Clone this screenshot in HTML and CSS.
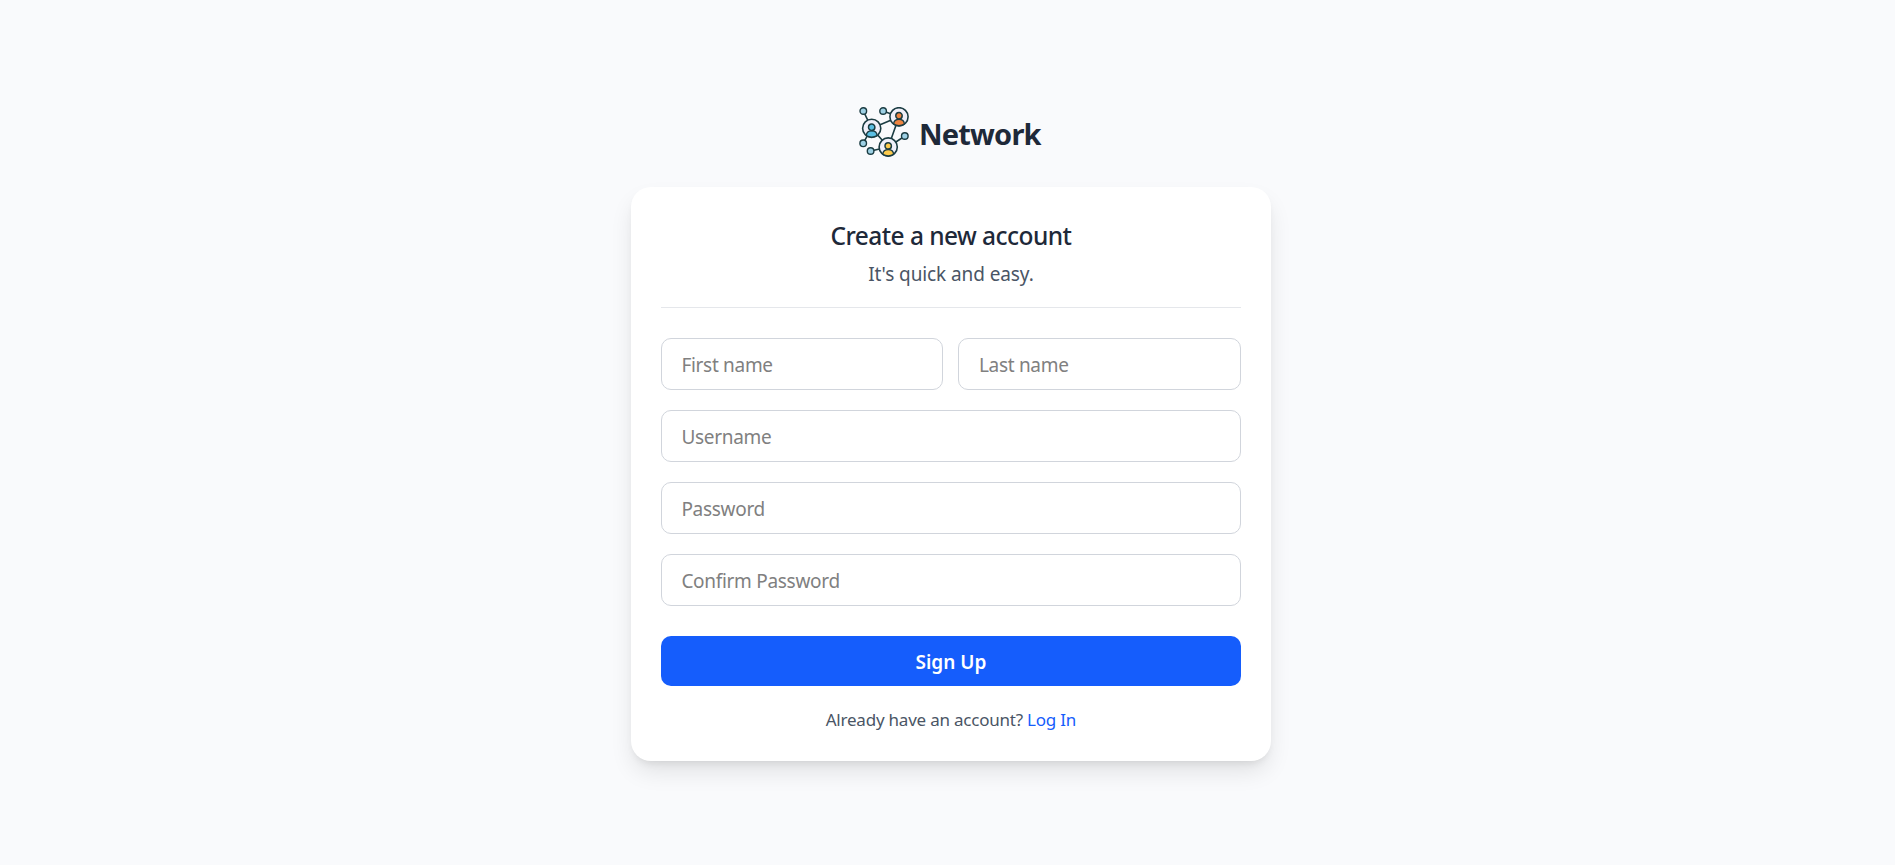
FILE: index.html
```html
<!DOCTYPE html>
<html lang="en">
<head>
<meta charset="utf-8">
<title>Network - Sign Up</title>
<link rel="stylesheet" href="styles.css">
</head>
<body>
<main class="page">
  <header class="brand">
    <svg class="logo" viewBox="0 0 50 50" aria-hidden="true">
      <defs>
        <g id="person">
          <circle r="9.1" fill="#f0f0fa" stroke="#1b3c42" stroke-width="1.6"/>
          <path d="M-5.4 7.4C-5.2 4-3 2.6 0 2.6S5.2 4 5.4 7.4Q3 9 0 9T-5.4 7.4Z" stroke="#1b3c42" stroke-width="1.4"/>
          <circle cy="-1.1" r="3.2" stroke="#1b3c42" stroke-width="1.5"/>
        </g>
      </defs>
      <path class="links" d="M4.3 4L12.7 21.3L4 36.3M24 4L40 9.7L12.7 21.3L29.3 40L40 9.7M46 29L29.3 40L11.7 44"/>
      <g class="nodes">
        <circle cx="4.3" cy="4" r="3.3"/>
        <circle cx="24.1" cy="4" r="3.3"/>
        <circle cx="4.2" cy="36.3" r="3.3"/>
        <circle cx="11.6" cy="44" r="3.3"/>
        <circle cx="45.8" cy="29" r="3.3"/>
      </g>
      <use href="#person" x="12.7" y="21.3" fill="#5bbfe3"/>
      <use href="#person" x="40" y="9.8" fill="#ee8440"/>
      <use href="#person" x="29.2" y="40" fill="#fdca4c"/>
    </svg>
    <h1 class="brand-name">Network</h1>
  </header>
  <section class="card">
    <div class="card-head">
      <h2 class="title">Create a new account</h2>
      <p class="subtitle">It's quick and easy.</p>
    </div>
    <form class="form">
      <div class="row">
        <input class="field" type="text" placeholder="First name">
        <input class="field" type="text" placeholder="Last name">
      </div>
      <input class="field" type="text" placeholder="Username">
      <input class="field" type="password" placeholder="Password">
      <input class="field" type="password" placeholder="Confirm Password">
      <button class="submit" type="button">Sign Up</button>
    </form>
    <p class="footer">Already have an account? <a class="link" href="#">Log In</a></p>
  </section>
</main>
</body>
</html>
```
FILE: styles.css
```css
* { box-sizing: border-box; }
body {
  margin: 0;
  background: #f9fafc;
  color: #1e2939;
  font-family: "Noto Sans", "Open Sans", sans-serif;
}
h1, h2, p { margin: 0; }
.page {
  min-height: 865px;
  display: flex;
  flex-direction: column;
  align-items: center;
  padding: 105px 0 0 6.8px;
}
.brand {
  display: flex;
  align-items: center;
  gap: 10px;
  height: 54px;
  margin-bottom: 28px;
  padding-right: 2px;
}
.logo { width: 50px; height: 50px; display: block; }
.links { fill: none; stroke: #1b3c42; stroke-width: 1.6; }
.nodes { fill: #9dd0e4; stroke: #1b3c42; stroke-width: 1.4; }
.brand-name {
  font-size: 29px;
  line-height: 38px;
  font-weight: 700;
  letter-spacing: -0.8px;
  padding-top: 3px;
}
.card {
  width: 640px;
  height: 574px;
  padding: 30px;
  border-radius: 20px;
  background: #fff;
  box-shadow: 0 12.5px 24px -3.75px rgba(0, 0, 0, .11), 0 5px 9px -4px rgba(0, 0, 0, .1);
}
.card-head {
  height: 91px;
  border-bottom: 1px solid #e5e7eb;
  text-align: center;
}
.title {
  font-size: 24.5px;
  line-height: 38px;
  font-weight: 550;
  letter-spacing: -0.55px;
}
.subtitle {
  margin-top: 2px;
  font-size: 19px;
  line-height: 34px;
  color: #4a5565;
  letter-spacing: -0.1px;
}
.form {
  display: flex;
  flex-direction: column;
  gap: 20px;
  margin-top: 30px;
}
.row { display: flex; gap: 15px; }
.field {
  width: 100%;
  min-width: 0;
  height: 52px;
  padding: 2px 19.5px 0;
  border: 1px solid #d1d5dc;
  border-radius: 10px;
  background: #fff;
  font-family: inherit;
  font-size: 19px;
  letter-spacing: -0.3px;
}
.field::placeholder { color: #808080; opacity: 1; }
.submit {
  height: 50px;
  margin-top: 10px;
  padding: 2px 0 0;
  border: 0;
  border-radius: 10px;
  background: #155dfc;
  color: #fff;
  font-family: inherit;
  font-size: 19px;
  font-weight: 600;
}
.footer {
  margin-top: 20px;
  font-size: 17px;
  line-height: 28px;
  text-align: center;
  color: #4a5565;
  letter-spacing: -0.22px;
}
.link { color: #155dfc; text-decoration: none; }
```
